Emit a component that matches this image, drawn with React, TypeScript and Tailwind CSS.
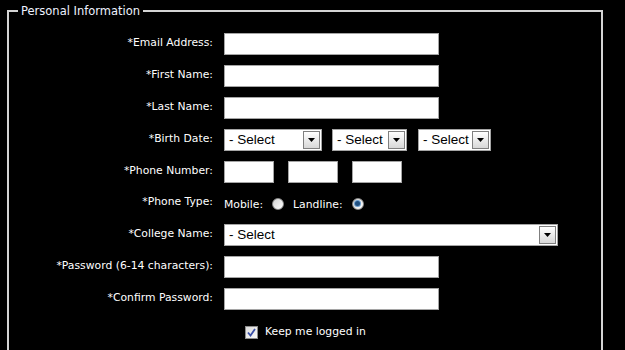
import React from "react";

const font = { fontFamily: '"DejaVu Sans", Verdana, Tahoma, sans-serif' };

function Label({ children }: { children: React.ReactNode }) {
  return (
    <div className="w-[204px] shrink-0 text-right text-[10.8px] leading-[14px] text-white pb-[3px] whitespace-nowrap">
      {children}
    </div>
  );
}

function Row({ label, children, h = "h-[22px]" }: { label: string; children: React.ReactNode; h?: string }) {
  return (
    <div className={`flex items-center ${h}`}>
      <Label>{label}</Label>
      <div className="ml-[11px] flex items-center">{children}</div>
    </div>
  );
}

function TextInput({ w }: { w: string }) {
  return <div className={`${w} h-[22px] bg-white border border-[#a5a5a5]`} />;
}

function Select({ w }: { w: string }) {
  return (
    <div className={`${w} h-[22px] bg-white border border-[#a5a5a5] flex items-center justify-between`}>
      <span
        className="pl-[4px] text-[13.5px] leading-[16px] text-black whitespace-nowrap"
        style={{ fontFamily: '"Liberation Sans", Arial, sans-serif' }}
      >
        - Select
      </span>
      <div className="mr-[1px] w-[17px] h-[18px] shrink-0 border border-[#7f7f7f] bg-gradient-to-b from-[#ffffff] to-[#d8d8d8] flex items-center justify-center">
        <svg width="7" height="4" viewBox="0 0 7 4">
          <path d="M0 0 H7 L3.5 4 Z" fill="#000" />
        </svg>
      </div>
    </div>
  );
}

function Radio({ checked }: { checked?: boolean }) {
  return (
    <div className="w-[12px] h-[12px] rounded-full border border-[#8a8a8a] bg-gradient-to-br from-[#d4d4d4] to-[#ffffff] flex items-center justify-center">
      {checked && <div className="w-[5px] h-[5px] rounded-full bg-[#1f4f80] ring-1 ring-[#6fa0d0]" />}
    </div>
  );
}

export default function App() {
  return (
    <div className="w-[625px] h-[350px] bg-black overflow-hidden" style={font}>
      <fieldset className="ml-[7px] mt-[4px] w-[596px] h-[400px] border-2 border-[#d4d4d4]">
        <legend className="ml-[9px] px-[3px] text-[11.5px] leading-[14px] text-[#eef2ff]">Personal Information</legend>
        <div className="pt-[15px] flex flex-col gap-[10px]">
          <Row label="*Email Address:"><TextInput w="w-[215px]" /></Row>
          <Row label="*First Name:"><TextInput w="w-[215px]" /></Row>
          <Row label="*Last Name:"><TextInput w="w-[215px]" /></Row>
          <Row label="*Birth Date:">
            <div className="flex">
              <Select w="w-[98px]" />
              <div className="ml-[10px]"><Select w="w-[75px]" /></div>
              <div className="ml-[11px]"><Select w="w-[73px]" /></div>
            </div>
          </Row>
          <Row label="*Phone Number:">
            <div className="flex gap-[14px]">
              <TextInput w="w-[50px]" />
              <TextInput w="w-[50px]" />
              <TextInput w="w-[50px]" />
            </div>
          </Row>
          <Row label="*Phone Type:" h="h-[21px]">
            <div className="flex items-center text-[10.8px] leading-[14px] text-white">
              <span className="pt-[2px]">Mobile:</span>
              <div className="ml-[9px]"><Radio /></div>
              <span className="ml-[9px] pt-[2px]">Landline:</span>
              <div className="ml-[9px]"><Radio checked /></div>
            </div>
          </Row>
          <Row label="*College Name:"><Select w="w-[334px]" /></Row>
          <Row label="*Password (6-14 characters):"><TextInput w="w-[215px]" /></Row>
          <Row label="*Confirm Password:"><TextInput w="w-[215px]" /></Row>
          <div className="flex items-center pl-[236px] pt-[5px]">
            <div className="w-[13px] h-[13px] border border-[#8c8c8c] bg-gradient-to-br from-[#dcdcdc] to-[#f8f8f8] flex items-center justify-center">
              <svg width="9" height="9" viewBox="0 0 9 9">
                <path d="M1 4.5 L3.5 7.5 L8 1" stroke="#3a4fa8" strokeWidth="1.8" fill="none" />
              </svg>
            </div>
            <span className="ml-[7px] text-[10.8px] leading-[14px] text-white">Keep me logged in</span>
          </div>
        </div>
      </fieldset>
    </div>
  );
}
